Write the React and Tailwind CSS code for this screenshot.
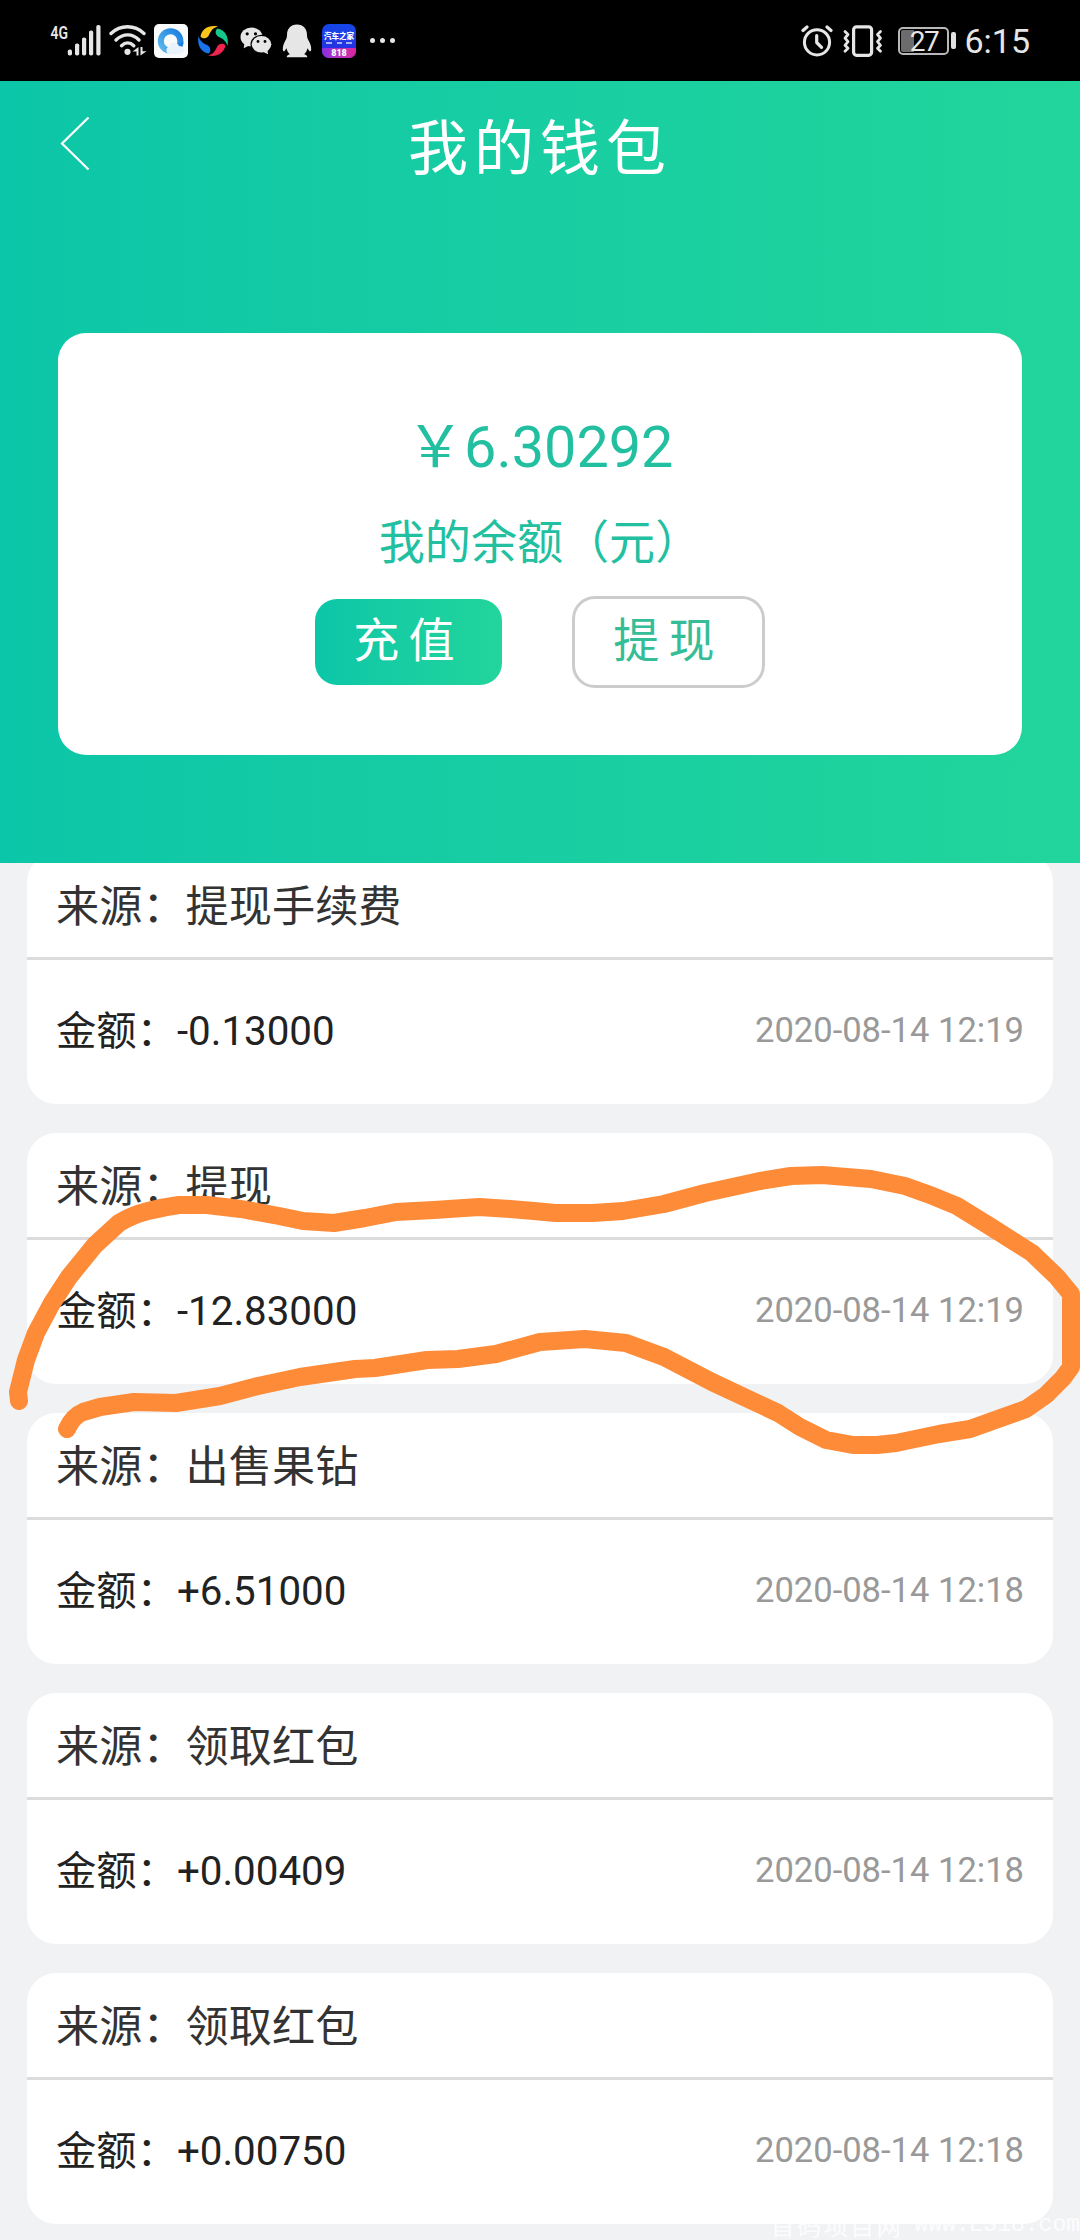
import React from "react";

const records = [
  { source: "提现手续费", amount: "-0.13000", time: "2020-08-14 12:19" },
  { source: "提现", amount: "-12.83000", time: "2020-08-14 12:19" },
  { source: "出售果钻", amount: "+6.51000", time: "2020-08-14 12:18" },
  { source: "领取红包", amount: "+0.00409", time: "2020-08-14 12:18" },
  { source: "领取红包", amount: "+0.00750", time: "2020-08-14 12:18" },
];

function SignalIcon() {
  return (
    <svg className="overflow-visible" width="50" height="34" viewBox="0 0 50 34" fill="#e6e6e6">
      <text x="-0.5" y="14.5" fontSize="18" fontWeight="600" textLength="17.5" lengthAdjust="spacingAndGlyphs" fontFamily="Roboto, sans-serif">4G</text>
      <rect x="16.8" y="25.5" width="4.2" height="6" rx="1.8" />
      <rect x="24" y="19.5" width="4.2" height="12" rx="1.8" />
      <rect x="31" y="13.5" width="4.2" height="18" rx="1.8" />
      <rect x="38" y="6.5" width="4.2" height="25" rx="1.8" />
      <rect x="45.3" y="1" width="4.2" height="30.5" rx="1.8" />
    </svg>
  );
}

function WifiIcon() {
  return (
    <svg width="38" height="34" viewBox="0 0 38 34" fill="none" stroke="#e6e6e6" strokeWidth="3.4" strokeLinecap="round">
      <path d="M2 9.5C11.5 0.5 25.5 0.5 35 9.5" />
      <path d="M7 16C14 9.2 23.5 9.2 30 16" />
      <path d="M12.5 21.7C16.4 18 21 18 24.8 21.7" />
      <circle cx="18.5" cy="27.8" r="3.1" fill="#e6e6e6" stroke="none" />
      <path d="M29.5 23v8.5h-2v-4h-4zM31.5 31.5V23h2v4.2h4z" fill="#e6e6e6" stroke="none" />
    </svg>
  );
}

function BrowserIcon() {
  return (
    <svg width="34" height="34" viewBox="0 0 34 34">
      <defs>
        <linearGradient id="ring" x1="0" y1="1" x2="1" y2="0">
          <stop offset="0" stopColor="#5cb8ee" />
          <stop offset="1" stopColor="#1c7fe0" />
        </linearGradient>
      </defs>
      <rect width="34" height="34" rx="5" fill="#f8fafc" />
      <circle cx="16.6" cy="17" r="9.8" fill="none" stroke="url(#ring)" strokeWidth="6" />
      <path d="M29.5 17.5c0 4-1.2 6.5-3.8 7.3l-4-4z" fill="#1c7fe0" />
      <path d="M15 30a4 4 0 0 1 .4-7.6 5 5 0 0 1 9.5-.3c3 0 5 1.6 5 4 0 2.3-1.9 3.9-4.4 3.9z" fill="#eaf3fb" />
    </svg>
  );
}

function SwirlIcon() {
  return (
    <svg width="34" height="34" viewBox="0 0 34 34">
      <path d="M4.5 12.5C6 5 12.5 0.8 22 2.5 16 4 14.5 8 12.5 12 10 15 6.5 15 4.5 12.5z" fill="#f9c51c" />
      <path d="M21.5 4.5C29 6 33.2 12.5 31.5 22 30 16 26 14.5 22 12.5 19 10 19 6.5 21.5 4.5z" fill="#14c98b" />
      <path d="M29.5 21.5C28 29 21.5 33.2 12 31.5 18 30 19.5 26 21.5 22 24 19 27.5 19 29.5 21.5z" fill="#ee2350" />
      <path d="M12.5 29.5C5 28 0.8 21.5 2.5 12 4 18 8 19.5 12 21.5 15 24 15 27.5 12.5 29.5z" fill="#1a73ea" />
    </svg>
  );
}

function WechatIcon() {
  return (
    <svg width="32" height="28" viewBox="0 0 32 28">
      <ellipse cx="11.5" cy="10" rx="11" ry="9.5" fill="#e6e6e6" />
      <path d="M4.5 16l-.8 5.2 6-3z" fill="#e6e6e6" />
      <ellipse cx="21.5" cy="17.3" rx="11" ry="9.5" fill="#000" />
      <ellipse cx="21.5" cy="17.3" rx="9.8" ry="8.3" fill="#e6e6e6" />
      <path d="M23 24.8l5 2.4-.6-4.7z" fill="#e6e6e6" />
      <circle cx="7.2" cy="6.8" r="1.6" />
      <circle cx="15.5" cy="6.8" r="1.6" />
      <circle cx="18" cy="14.5" r="1.4" />
      <circle cx="25" cy="14.5" r="1.4" />
    </svg>
  );
}

function QQIcon() {
  return (
    <svg width="30" height="34" viewBox="0 0 30 34" fill="#e6e6e6">
      <path d="M15 .5C8.500.5 5 5 5 11c0 1.500-.2 2.500-.8 4C2.500 18 .5 22 .8 25.500c.2 2 1.200 2.500 2.200 1l1.500-2.300c.5 2.500 1.800 4.500 3.300 6-2 .6-3.300 1.500-3 3h20.400c.3-1.500-1-2.400-3-3 1.500-1.500 2.800-3.500 3.300-6l1.500 2.300c1 1.500 2 1 2.200-1 .3-3.500-1.700-7.500-3.400-10.500-.6-1.500-.8-2.500-.8-4C25 5 21.500.5 15 .5z" />
    </svg>
  );
}

function AutohomeIcon() {
  return (
    <div className="w-[34px] h-[34px] rounded-[7px] overflow-hidden bg-linear-to-b from-[#1347e8] to-[#2a25e0] flex flex-col text-white text-center">
      <div className="h-[24px] pt-[8px] text-[7.5px] leading-[9px] font-black whitespace-nowrap">
        汽车之家
        <div className="mx-[4px] h-[2px] mt-px flex justify-between">
          <i className="w-[6px] bg-white/60" />
          <i className="w-[5px] bg-white/60" />
          <i className="w-[6px] bg-white/60" />
        </div>
      </div>
      <div className="h-[10px] bg-linear-to-r from-[#8a2be0] to-[#e0209a] text-[9px] leading-[10px] font-black">818</div>
    </div>
  );
}

function AlarmIcon() {
  return (
    <svg width="32" height="32" viewBox="0 0 32 32" fill="none" stroke="#e6e6e6" strokeWidth="3" strokeLinecap="round" strokeLinejoin="round">
      <circle cx="16" cy="17.3" r="12.6" />
      <path d="M15.7 10.5v7l4.8 4.8M2 5.5l4-3.5M30 5.5L26 2" strokeWidth="3.2" />
    </svg>
  );
}

function VibrateIcon() {
  return (
    <svg width="42" height="32" viewBox="0 0 42 32" fill="none" stroke="#e6e6e6" strokeWidth="3.2" strokeLinecap="round" strokeLinejoin="round">
      <rect x="11.6" y="1.8" width="18" height="28.5" rx="3" />
      <path d="M3 6.5l3 3-3 3.6 3 3.6-3 3.6 3 3-3 3M38.5 6.5l-3 3 3 3.6-3 3.6 3 3.6-3 3 3 3" strokeWidth="2.8" />
    </svg>
  );
}

function Battery() {
  return (
    <div className="flex items-center">
      <div className="relative w-[51px] h-[28px] rounded-[5px] border-2 border-[#b8b8b8] p-px">
        <div className="w-[13px] h-full bg-[#6c6c6c] rounded-l-[2px]" />
        <span className="absolute inset-0 text-center text-[28px] leading-[25px] tracking-[-1.5px]">27</span>
      </div>
      <div className="ml-[2px] w-[5px] h-[17px] rounded-[2px] bg-[#e0e0e0]" />
    </div>
  );
}

function StatusBar() {
  return (
    <div className="h-[81px] bg-black text-[#e6e6e6] flex items-center justify-between pl-[51px] pr-[50px]">
      <div className="flex items-center">
        <SignalIcon />
        <div className="ml-[8px]"><WifiIcon /></div>
        <div className="ml-[7px]"><BrowserIcon /></div>
        <div className="ml-[8px]"><SwirlIcon /></div>
        <div className="ml-[10px]"><WechatIcon /></div>
        <div className="ml-[10px]"><QQIcon /></div>
        <div className="ml-[10px]"><AutohomeIcon /></div>
        <div className="ml-[14px] flex gap-[5px]">
          <i className="size-[5px] rounded-full bg-[#e6e6e6]" />
          <i className="size-[5px] rounded-full bg-[#e6e6e6]" />
          <i className="size-[5px] rounded-full bg-[#e6e6e6]" />
        </div>
      </div>
      <div className="flex items-center">
        <AlarmIcon />
        <div className="ml-[9px]"><VibrateIcon /></div>
        <div className="ml-[14px]"><Battery /></div>
        <span className="ml-[8px] text-[34px] leading-[34px]">6:15</span>
      </div>
    </div>
  );
}

function WalletHeader() {
  return (
    <header className="h-[782px] bg-linear-to-r from-[#0bc6a8] to-[#22d59b]">
      <div className="h-[252px] px-[60px] pt-[36px] grid grid-cols-[1fr_auto_1fr] items-start">
        <svg className="block" width="30" height="54" viewBox="0 0 30 54" fill="none" stroke="#fff" strokeWidth="2.2">
          <path d="M28.5 0.5L2 26.5l26.5 26" />
        </svg>
        <h1 className="pt-[3px] text-[60px] leading-[60px] tracking-[6px] text-white">我的钱包</h1>
      </div>
      <div className="mx-[58px] h-[422px] rounded-[28px] bg-white flex flex-col items-center text-[#22bfa0]">
        <div className="mt-[80px] text-[57.6px] leading-[70px]">￥6.30292</div>
        <div className="mt-[30px] text-[46.08px] leading-[60px]">我的余额（元）</div>
        <div className="mt-[23px] flex items-center gap-[70px] text-[46.08px] tracking-[9.2px]">
          <button className="w-[187px] h-[86px] pb-[2px] rounded-[22px] bg-linear-to-r from-[#0bc6a8] to-[#22d59b] text-white leading-[80px]">充值</button>
          <button className="w-[193px] h-[92px] pb-[2px] rounded-[23px] border-3 border-[#ccc] text-[#35bd97] leading-[80px]">提现</button>
        </div>
      </div>
    </header>
  );
}

function RecordCard({ source, amount, time }) {
  return (
    <div className="h-[251px] shrink-0 rounded-[29px] bg-white">
      <div className="h-[107px] border-b-3 border-[#dcdcdc] px-[29px] pt-[4px] text-[43.2px] leading-[101px] text-[#333]">
        来源：{source}
      </div>
      <div className="px-[29px] flex items-baseline justify-between leading-[144px]">
        <span className="text-[40.32px] text-[#222]">金额：{amount}</span>
        <span className="-translate-y-[3px] text-[34.56px] text-[#999]">{time}</span>
      </div>
    </div>
  );
}

// hand drawn loop around the second record
function Scribble() {
  return (
    <svg className="absolute left-0 top-0 pointer-events-none" width="1080" height="2240" viewBox="0 0 1080 2240" fill="none" stroke="#fe8b38" strokeWidth="18" strokeLinecap="round" strokeLinejoin="round">
      <path d="M19 1401L18 1392 26 1360 36 1333 52 1303 69 1277 95 1245 119 1223Q132 1215 148 1211T179 1205L207 1205 241 1209 279 1216 303 1221 334 1223 365 1218 396 1212 434 1210 479 1207 510 1209 534 1211 555 1213 593 1213 623 1211 664 1204 705 1193 760 1181 791 1176 822 1175 871 1179 905 1186 Q932 1195 957 1206L991 1227 1032 1253 1057 1277 1071 1294V1367L1063 1378 1046 1395 1026 1409 970 1429 939 1434 896 1443 877 1445 853 1445 826 1440 800 1427 778 1413 712 1382 664 1357 626 1343 585 1339 540 1342 496 1354 458 1359 427 1360 375 1368 355 1369 300 1377 258 1386 220 1396 176 1403 134 1402 100 1407 83 1412Q73 1416 67 1429" />
    </svg>
  );
}

export default function App() {
  return (
    <div className="relative w-[1080px] h-[2240px] overflow-hidden flex flex-col bg-[#f1f2f4] font-['Roboto','Noto_Sans_CJK_SC',sans-serif]">
      <StatusBar />
      <WalletHeader />
      <main className="flex-1 min-h-0 overflow-hidden px-[27px]">
        <div className="-mt-[10px] flex flex-col gap-[29px]">
          {records.map((r, i) => (
            <RecordCard key={i} {...r} />
          ))}
        </div>
      </main>
      <Scribble />
      <div className="absolute right-0 bottom-0 h-[30px] flex items-center gap-[11px] whitespace-nowrap text-white/80 leading-[30px]">
        <span className="text-[24px] tracking-[2.5px] font-['Noto_Sans_CJK_SC',sans-serif]">首码项目网</span>
        <span className="text-[23px] font-['Liberation_Mono',monospace]">www.E318.com</span>
      </div>
    </div>
  );
}
